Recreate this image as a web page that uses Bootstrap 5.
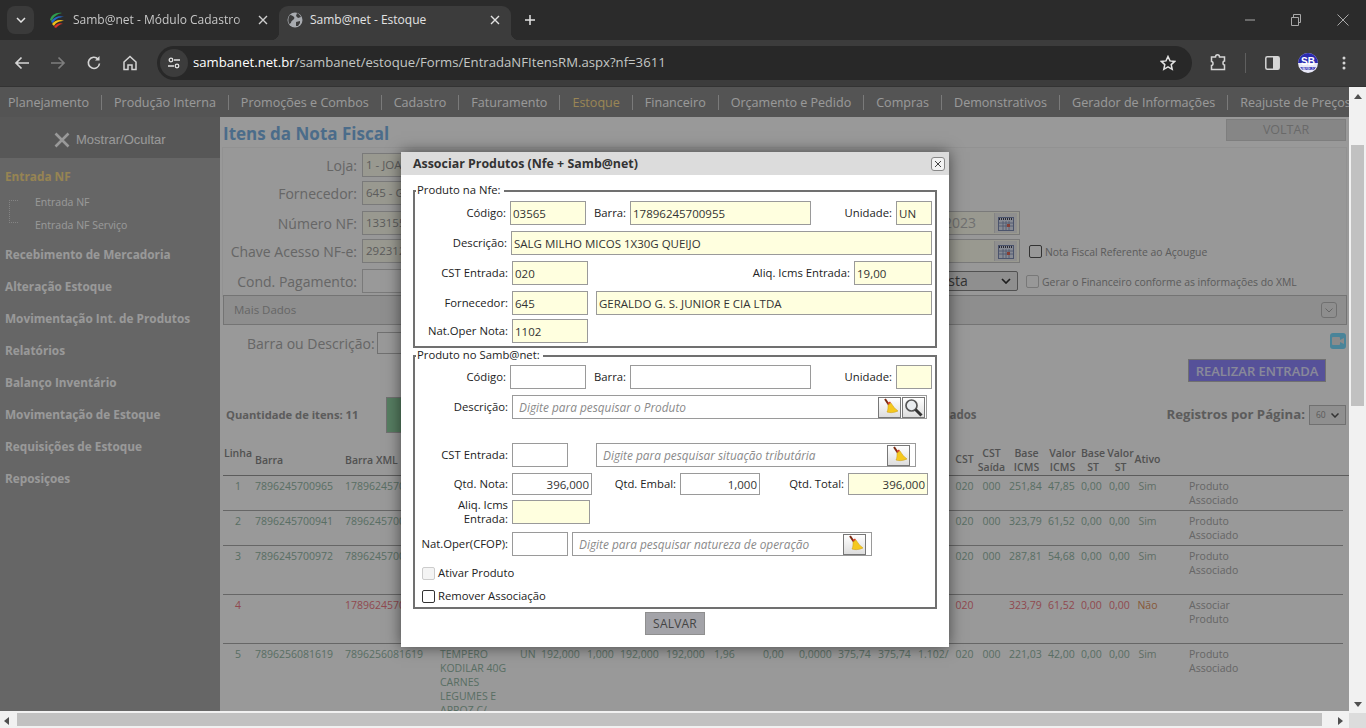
<!DOCTYPE html>
<html lang="pt-BR">
<head>
<meta charset="UTF-8">
<title>Samb@net - Estoque</title>
<link href="https://cdn.jsdelivr.net/npm/bootstrap@5.3.0/dist/css/bootstrap.min.css" rel="stylesheet">
<style>
html,body{height:100%;overflow:hidden}
body{font-family:"Open Sans",sans-serif;background:#fff;color:#333;font-size:12px}
svg{display:block;flex:none}

/* browser chrome */
.tabstrip{height:40px;background:#2b2b2b;padding:6px 0 0 7px;color:#c7c7c7;font-size:12px}
.tabdrop{width:27px;height:28px;border-radius:8px;background:#3a3a3a;margin-right:7px}
.tabitem{height:34px;padding:0 0 6px 7px}
.tabitem.inactive{width:238px}
.tabitem.active{width:232px;margin-left:0;background:#3c3c3c;border-radius:9px 9px 0 0;padding-left:8px;position:relative;color:#e3e3e3}
.tabitem.active::before,.tabitem.active::after{content:"";position:absolute;bottom:0;width:8px;height:8px}
.tabitem.active::before{left:-8px;background:radial-gradient(circle at 0 0,transparent 8px,#3c3c3c 8.5px)}
.tabitem.active::after{right:-8px;background:radial-gradient(circle at 100% 0,transparent 8px,#3c3c3c 8.5px)}
.tabtitle{white-space:nowrap;overflow:hidden;margin-left:7px;flex:1}
.inactive .tabtitle{-webkit-mask-image:linear-gradient(90deg,#000 92%,transparent);mask-image:linear-gradient(90deg,#000 92%,transparent)}
.tabclose{margin:0 11px 0 8px}
.newtab{margin:8px 0 0 13px}
.winbtns{gap:36px;margin-left:auto;padding-right:17px;padding-bottom:6px}
.toolbar{height:47px;background:#3c3c3c;padding:0 0 1px 4px;border-bottom:1px solid #333}
.toolslot{width:36px;display:flex;justify-content:center;flex:none}
.extslot{margin-left:8px}
.addrbar{width:1035px;height:34px;background:#282828;border-radius:17px;margin-left:9px;padding:0 16px 0 3px;font-size:13.15px;color:#c4c7c5;flex:none}
.addrbar b{font-weight:400;color:#fff}
.sitechip{width:28px;height:28px;border-radius:50%;background:#3c3c3c;margin-right:5px}
.toolsep{width:1px;height:20px;background:#5f5f5f;margin:0 8px 0 9px;flex:none}

/* page */
.pageframe{height:624px}
.viewport{width:1349px;height:624px;overflow:hidden;position:relative;background:#fff}
.vtrack{width:17px;background:#f1f1f1;padding-top:3px}
.vthumb{width:13px;height:261px;margin:46px 2px 0;background:#c1c1c1}
.htrack{height:17px;background:#f1f1f1;padding-top:2px}
.hthumb{width:1305px;height:13px;background:#c1c1c1}
.hcorner{width:17px;height:15px;background:#dcdcdc;margin-left:auto}
.overlay{position:absolute;inset:0;background:rgba(0,0,0,.4);z-index:5}

.topmenu{height:30px;background:#8c8c8c;white-space:nowrap;padding-left:8px;font-size:12.55px}
.topmenu span{color:#fff;padding-right:12px;margin-right:12px;border-right:1px solid #ccc;line-height:15px;flex:none}
.topmenu span.cur{color:#ffdf8e}
.topmenu span:last-child{border:0}

.sidemenu{width:220px;height:594px;background:#aaa;color:#fff;flex:none}
.sidehead{height:41px;background:#919191;padding:5px 0 0 54px;font-family:"Liberation Sans",sans-serif;font-size:13px;gap:6px}
.sideitem{font-weight:700;font-size:11.8px;height:32px;line-height:30px;padding-left:5px}
.sideitem.cur{color:#fbdd8a;height:36px;line-height:36px}
.sidesub{font-size:10.5px;height:23px;line-height:23px;padding-left:35px}
.subtree{height:46px;position:relative;margin:-3px 0 2px}
.subtree i{position:absolute;left:9px;top:9px;width:9px;height:23px;border-left:1px dotted #ddd;border-top:1px dotted #ddd;border-bottom:1px dotted #ddd;border-right:0}

.mainpane{width:1129px;height:594px;overflow:hidden;flex:none}
.titlerow{height:30px;padding:0 3px}
.pagetitle{font-size:17px;font-weight:700;color:#7eb5e6;padding-top:3px}
.backbtn{width:120px;height:22px;background:#e0e0e0;border:1px solid #d2d2d2;color:#b0b0b0;font-size:12.5px;margin-top:-4px;text-align:center;line-height:20px}
.formpanel{height:150px;margin:0 2px;background:#fdfdfd;border:1px solid #f3f3f3;border-bottom:0;padding-top:5px}
.fmrow{height:24px;margin-bottom:4px;font-size:14px;color:#aaa}
.fmrow.gap6{margin-bottom:6px}
.fmlbl{width:134px;text-align:right;margin-right:5px;white-space:nowrap;flex:none}
.fmin{height:24px;width:200px;border:1px solid #ccc;background:#fffff0;font-size:11.5px;padding:0 3px;line-height:22px;color:#999;overflow:hidden;white-space:nowrap}
.fmin.blank{background:#fff}
.fmright{margin-left:auto;width:448px;flex:none}
.dateout{width:122px;height:24px;border:1px solid #ccc;background:#fffff0;padding:2px;font-size:14px;color:#bbb;line-height:18px;flex:none}
.calbtn{width:23px;height:20px;background:#eee;border-left:1px solid #ddd;margin-left:18px}
.fmnote{font-size:10.4px;color:#999;white-space:nowrap;margin:3px 0 0 3px}
.fmcheck{width:13px;height:13px;border:1px solid #555;border-radius:2px;background:transparent;flex:none}
.fmcheck.near{margin-left:9px}
.fmcheck.off{border-color:#c8c8c8;margin-left:8px}
.fmselect{width:98px;height:20px;border:1px solid #888;border-radius:2px;background:#eee;font-size:14px;color:#555;padding:0 6px 0 4px;line-height:18px;margin-left:22px;flex:none}
.moredata{height:30px;margin:-2px 2px 0 3px;background:#ededed;border:1px solid #c2c2c2;padding:0 9px 0 10px;font-size:11.5px;color:#aaa}
.chevbox{width:16px;height:16px;border:1px solid #bbb;border-radius:3px}
.searchrow{height:34px;font-size:14px;color:#aaa;padding:2px 3px 0 27px}
.searchrow .blank{width:40px;height:22px;border:1px solid #bbb;background:#fff;margin-left:2px}
.vidbtn{width:16px;height:16px;border-radius:3px;background:#7cdcff;margin-top:-4px}
.actionrow{height:35px;justify-content:flex-end;padding-right:23px}
.enterbtn{width:138px;height:23px;background:#8f88ff;border:1px solid #bbb;color:#e4e4ff;font-size:13px;font-weight:600;text-align:center;line-height:22px}
.pagerrow{height:42px;padding:0 3px 0 6px;color:#999;font-weight:700}
.itemcount{width:160px;font-size:11.2px}
.greenbtn{width:60px;height:36px;background:#8fd0a2;border:1px solid #bbb}
.pagehint{margin-left:auto;font-size:11.5px}
.perpage{font-size:13.2px;margin-left:190px;white-space:nowrap}
.perbox{width:37px;height:20px;border:1px solid #bbb;background:#eee;margin-left:4px;font-size:8.5px;font-weight:400;padding-left:6px;gap:5px}

.itemtable{table-layout:fixed;width:1126px;border-collapse:collapse;font-size:10.5px;line-height:14px;margin:9px 0 0 3px}
.itemtable th{font-weight:600;color:#888;vertical-align:bottom;text-align:center;padding:0 0 1px;line-height:14px;height:30px;border-bottom:1px solid #999;font-size:10.5px}
.itemtable th.lft{text-align:left;padding-left:2px;padding-bottom:8px}
.itemtable th.up{vertical-align:top;padding-top:1px}
.itemtable th.mid{vertical-align:middle}
.itemtable td{vertical-align:top;padding:3px 2px 0;border-bottom:1px solid #aaa;color:#94b8a6;white-space:nowrap;overflow:hidden}
.itemtable td.nobrd{border-bottom:0}
.itemtable .txtc{text-align:center}
.itemtable .acttxt{color:#aaa;padding-left:28px}
.itemtable .descr{white-space:normal;padding-right:8px}
.itemtable tr.bad td{color:#f07a85}
.itemtable tr.bad td.acttxt{color:#aaa}
.itemtable td.yes{color:#a0b8a8}
.itemtable tr.bad td.no{color:#e2925e}
.itemtable tr.h35{height:35px}
.itemtable tr.h49{height:49px}

/* dialog */
.assocdlg{position:absolute;z-index:10;left:401px;top:65px;width:548px;height:495px;background:#fff;box-shadow:0 0 14px rgba(0,0,0,.55);font-size:11.3px;color:#222}
.dlghead{height:23px;background:#dcdcdc;padding:1px 4px 0 12px;font-weight:700;font-size:12.4px;color:#333}
.dlgx{width:14px;height:14px;border:1px solid #888;border-radius:3px;background:#f2f2f2}
.dlgfield{margin:0 0 0 12px;width:524px;border:2px solid #707070;position:relative;min-width:0}
.dlgfield legend{float:none;width:auto;margin:-9px 0 0 1px;padding:0 3px 0 1px;font-size:11.3px;line-height:14px;color:#222;background:#fff;position:absolute;left:0;top:0}
.nfefield{height:158px;margin-top:15px;padding-top:9px}
.sysfield{height:254px;margin-top:7px;padding-top:8px}
.dlgrow{display:flex;align-items:center;white-space:nowrap;margin-bottom:6px}
.dlgrow.tight4{margin-bottom:4px}
.dlgrow.tight3{margin-bottom:3px}
.dlgrow.wide{margin-bottom:24px}
.dlgrow.nat{margin-bottom:6px}
.dlglb{text-align:right;padding-right:4px;flex:none}
.dlgin{height:24px;border:1px solid #9a9a9a;background:#fff;padding:0 2px;font-size:11.5px;font-family:inherit;color:#333;flex:none;border-radius:0;outline:0}
.dlgin.yel{background:#ffffdf}
.dlgin.num{text-align:right}
.lb95{width:95px}.lb96{width:96px}.lb97{width:97px}.lb44{width:44px}.lb85{width:85px}.lb266{width:266px}.lb88{width:88px}
.in36{width:36px}.in56{width:56px}.in76{width:76px}.in78{width:78px}.in80{width:80px}.in181{width:181px}.in421{width:421px}.in336{width:336px}
.ms8{margin-left:8px}.ms4{margin-left:4px}.ms28{margin-left:28px}
.row22{height:22px}
.searchbox{height:24px;border:1px solid #9a9a9a;display:flex;align-items:center;padding-right:1px;gap:1px;flex:none}
.searchbox input{border:0;outline:0;flex:1;min-width:0;height:20px;font-size:11.85px;font-style:italic;font-family:inherit;padding:0 6px;background:transparent}
.searchbox input::placeholder{color:#8a8a8a;opacity:1}
.sb415{width:415px}.sb320{width:320px}.sb300{width:300px}
.iconbtn{width:23px;height:21px;border:1px solid #777;background:linear-gradient(#fff,#ddd);display:flex;align-items:center;justify-content:center;flex:none}
.aliqlb{width:97px;line-height:14px;white-space:normal}
.chkrow{height:23px;padding-left:7px;gap:3px;margin:0}
.chkbox{width:13px;height:13px;border:1px solid #333;border-radius:2px;flex:none}
.chkbox.off{border-color:#ccc;background:#f4f4f4}
.savewrap{padding-top:3px}
.savebtn{width:60px;height:23px;background:#a3a3a8;border:1px solid #8f8f8f;color:#444;font-size:12px;line-height:21px;text-align:center;letter-spacing:.2px}
</style>
</head>
<body>

<div class="tabstrip d-flex align-items-start">
  <div class="tabdrop d-flex align-items-center justify-content-center">
    <svg width="10" height="6" viewBox="0 0 10 6"><path d="M1 1l4 4 4-4" fill="none" stroke="#e3e3e3" stroke-width="1.5"/></svg>
  </div>
  <div class="tabitem inactive d-flex align-items-center">
    <svg width="18" height="18" viewBox="0 0 18 18"><path d="M2 9C3 4 8 1 14 2 9 3 5 6 4 10z" fill="#2e9e4f"/><path d="M3 11C5 7 10 4 16 6 11 6 7 8 5 12z" fill="#2467c9"/><path d="M4 13C7 9 12 8 16 10 12 10 8 11 6 15z" fill="#f2c21a"/><path d="M6 16C8 13 12 11 15 13 12 13 10 15 8 17z" fill="#d8322a"/></svg>
    <div class="tabtitle">Samb@net - Módulo Cadastro</div>
    <svg class="tabclose" width="10" height="10" viewBox="0 0 10 10"><path d="M1 1l8 8M9 1l-8 8" stroke="#cfcfcf" stroke-width="1.4"/></svg>
  </div>
  <div class="tabitem active d-flex align-items-center">
    <svg width="16" height="16" viewBox="0 0 16 16"><circle cx="8" cy="8" r="7.5" fill="#a8abb0"/><path d="M3 3c2 0 3 1 4 2s0 2-1 3-2 1-2 3l-2 1C1 9 1 5 3 3zM10 1c2 1 3 2 4 4l-3 1-2-2zM9 10l4-1 0 2-2 3-2 0z" fill="#3c3c3c"/></svg>
    <div class="tabtitle">Samb@net - Estoque</div>
    <svg class="tabclose" width="10" height="10" viewBox="0 0 10 10"><path d="M1 1l8 8M9 1l-8 8" stroke="#e3e3e3" stroke-width="1.4"/></svg>
  </div>
  <svg class="newtab" width="12" height="12" viewBox="0 0 12 12"><path d="M6 1v10M1 6h10" stroke="#e3e3e3" stroke-width="1.5"/></svg>
  <div class="winbtns d-flex align-items-center h-100">
    <svg width="10" height="10" viewBox="0 0 10 10"><path d="M0 5h10" stroke="#a9a9a9"/></svg>
    <svg width="10" height="12" viewBox="0 0 10 12"><path d="M.5 3.500h7v8h-7zM2.500 3V.5h7v8H8" fill="none" stroke="#a9a9a9"/></svg>
    <svg width="12" height="12" viewBox="0 0 12 12"><path d="M.5.5l11 11M11.500.5l-11 11" stroke="#a9a9a9"/></svg>
  </div>
</div>

<div class="toolbar d-flex align-items-center">
  <div class="toolslot"><svg width="16" height="14" viewBox="0 0 16 14"><path d="M15 7H2M7.500 1.500L2 7l5.500 5.500" fill="none" stroke="#d5d5d5" stroke-width="1.700"/></svg></div>
  <div class="toolslot"><svg width="16" height="14" viewBox="0 0 16 14"><path d="M1 7h13M8.500 1.500L14 7l-5.500 5.500" fill="none" stroke="#7d7d7d" stroke-width="1.700"/></svg></div>
  <div class="toolslot"><svg width="16" height="16" viewBox="0 0 16 16"><path d="M13.500 8.500A5.600 5.600 0 1 1 12 4" fill="none" stroke="#d5d5d5" stroke-width="1.600"/><path d="M13.500 1v4.500H9z" fill="#d5d5d5"/></svg></div>
  <div class="toolslot"><svg width="16" height="16" viewBox="0 0 16 16"><path d="M2 7l6-5.500L14 7v7.500h-4V10H6v4.500H2z" fill="none" stroke="#d5d5d5" stroke-width="1.500"/></svg></div>
  <div class="addrbar d-flex align-items-center">
    <div class="sitechip d-flex align-items-center justify-content-center">
      <svg width="14" height="12" viewBox="0 0 14 12"><circle cx="4" cy="3" r="1.800" fill="none" stroke="#e3e3e3" stroke-width="1.300"/><path d="M7 3h6M1 9h6" stroke="#e3e3e3" stroke-width="1.300"/><circle cx="10" cy="9" r="1.800" fill="none" stroke="#e3e3e3" stroke-width="1.300"/></svg>
    </div>
    <div><b>sambanet.net.br</b>/sambanet/estoque/Forms/EntradaNFItensRM.aspx?nf=3611</div>
    <svg class="ms-auto" width="16" height="16" viewBox="0 0 16 16"><path d="M8 1.500l2 4.400 4.700.5-3.500 3.200 1 4.700L8 11.900l-4.200 2.400 1-4.700L1.300 6.400 6 5.900z" fill="none" stroke="#e3e3e3" stroke-width="1.500"/></svg>
  </div>
  <div class="toolslot extslot"><svg width="16" height="17" viewBox="0 0 16 17"><path d="M1.500 3h4c0-3 4-3 4 0h5v4c-2 0-2 4 0 4v4.500h-13v-4c2 0 2-4 0-4z" fill="none" stroke="#d5d5d5" stroke-width="1.500"/></svg></div>
  <div class="toolsep"></div>
  <div class="toolslot"><svg width="15" height="14" viewBox="0 0 15 14"><rect x=".8" y=".8" width="13.400" height="12.400" rx="1.500" fill="none" stroke="#d5d5d5" stroke-width="1.500"/><rect x="8" y="1" width="6" height="12" fill="#d5d5d5"/></svg></div>
  <div class="toolslot"><svg width="20" height="20" viewBox="0 0 20 20"><circle cx="10" cy="10" r="10" fill="#e8e8f8"/><path d="M0 10a10 10 0 0 1 20 0z" fill="#2b2bb0"/><path d="M2 14h16l-2 3H4z" fill="#2b2bb0"/><text x="10" y="12" text-anchor="middle" font-family="Liberation Sans" font-weight="700" font-size="10" fill="#fff">SB</text><text x="10" y="17" text-anchor="middle" font-family="Liberation Sans" font-size="4" fill="#fff">VAREJO</text></svg></div>
  <div class="toolslot"><svg width="4" height="14" viewBox="0 0 4 14"><circle cx="2" cy="2" r="1.500" fill="#d5d5d5"/><circle cx="2" cy="7" r="1.500" fill="#d5d5d5"/><circle cx="2" cy="12" r="1.500" fill="#d5d5d5"/></svg></div>
</div>

<div class="pageframe d-flex">
  <div class="viewport">
    <div class="topmenu d-flex align-items-center">
      <span>Planejamento</span><span>Produção Interna</span><span>Promoções e Combos</span><span>Cadastro</span><span>Faturamento</span><span class="cur">Estoque</span><span>Financeiro</span><span>Orçamento e Pedido</span><span>Compras</span><span>Demonstrativos</span><span>Gerador de Informações</span><span>Reajuste de Preços</span>
    </div>
    <div class="d-flex">
      <div class="sidemenu">
        <div class="sidehead d-flex align-items-center">
          <svg width="16" height="16" viewBox="0 0 16 16"><path d="M1.500 1.500l13 13M14.500 1.500l-13 13" stroke="#fff" stroke-width="2.600"/></svg>
          Mostrar/Ocultar
        </div>
        <div class="sideitem cur">Entrada NF</div>
        <div class="subtree"><i></i>
          <div class="sidesub">Entrada NF</div>
          <div class="sidesub">Entrada NF Serviço</div>
        </div>
        <div class="sideitem">Recebimento de Mercadoria</div>
        <div class="sideitem">Alteração Estoque</div>
        <div class="sideitem">Movimentação Int. de Produtos</div>
        <div class="sideitem">Relatórios</div>
        <div class="sideitem">Balanço Inventário</div>
        <div class="sideitem">Movimentação de Estoque</div>
        <div class="sideitem">Requisições de Estoque</div>
        <div class="sideitem">Reposiçoes</div>
      </div>
      <div class="mainpane">
        <div class="titlerow d-flex align-items-center justify-content-between">
          <div class="pagetitle">Itens da Nota Fiscal</div>
          <div class="backbtn">VOLTAR</div>
        </div>
        <div class="formpanel">
          <div class="fmrow d-flex align-items-center"><div class="fmlbl">Loja:</div><div class="fmin">1 - JOAO</div></div>
          <div class="fmrow gap6 d-flex align-items-center"><div class="fmlbl">Fornecedor:</div><div class="fmin">645 - GERALDO</div></div>
          <div class="fmrow d-flex align-items-center"><div class="fmlbl">Número NF:</div><div class="fmin">133155</div>
            <div class="fmright d-flex align-items-center"><div class="dateout d-flex align-items-center justify-content-end">/2023<div class="calbtn d-flex align-items-center justify-content-center"><svg width="16" height="15" viewBox="0 0 16 15"><rect x=".5" y="1.500" width="15" height="13" fill="#dfe6f5" stroke="#7d8db5"/><path d="M1 3h14" stroke="#445" stroke-width="2" stroke-dasharray="1 1"/><path d="M1 7h14M1 10h14M5 5v9M8 5v9M11 5v9" stroke="#7d8db5" stroke-width=".8"/><rect x="9" y="8" width="3" height="3" fill="#e06a5a"/></svg></div></div></div>
          </div>
          <div class="fmrow gap6 d-flex align-items-center"><div class="fmlbl">Chave Acesso NF-e:</div><div class="fmin">29231245</div>
            <div class="fmright d-flex align-items-center"><div class="dateout d-flex align-items-center justify-content-end"><div class="calbtn d-flex align-items-center justify-content-center"><svg width="16" height="15" viewBox="0 0 16 15"><rect x=".5" y="1.500" width="15" height="13" fill="#dfe6f5" stroke="#7d8db5"/><path d="M1 3h14" stroke="#445" stroke-width="2" stroke-dasharray="1 1"/><path d="M1 7h14M1 10h14M5 5v9M8 5v9M11 5v9" stroke="#7d8db5" stroke-width=".8"/><rect x="9" y="8" width="3" height="3" fill="#e06a5a"/></svg></div></div>
              <div class="fmcheck near"></div><div class="fmnote">Nota Fiscal Referente ao Açougue</div></div>
          </div>
          <div class="fmrow d-flex align-items-center"><div class="fmlbl">Cond. Pagamento:</div><div class="fmin blank"></div>
            <div class="fmright d-flex align-items-center"><div class="fmselect d-flex align-items-center justify-content-between"><span>à Vista</span><svg width="10" height="6" viewBox="0 0 10 6"><path d="M1 1l4 4 4-4" fill="none" stroke="#333" stroke-width="1.700"/></svg></div>
              <div class="fmcheck off"></div><div class="fmnote">Gerar o Financeiro conforme as informações do XML</div></div>
          </div>
        </div>
        <div class="moredata d-flex align-items-center justify-content-between">Mais Dados
          <div class="chevbox d-flex align-items-center justify-content-center"><svg width="8" height="5" viewBox="0 0 8 5"><path d="M.5.5L4 4 7.500.5" fill="none" stroke="#aaa"/></svg></div>
        </div>
        <div class="searchrow d-flex align-items-center justify-content-between">
          <div class="d-flex align-items-center">Barra ou Descrição:<div class="blank"></div></div>
          <div class="vidbtn d-flex align-items-center justify-content-center"><svg width="12" height="8" viewBox="0 0 12 8"><rect width="8" height="8" rx="1" fill="#e8e8e8"/><path d="M8 3l4-2v6L8 5z" fill="#e8e8e8"/></svg></div>
        </div>
        <div class="actionrow d-flex align-items-start"><div class="enterbtn">REALIZAR ENTRADA</div></div>
        <div class="pagerrow d-flex align-items-center">
          <div class="itemcount">Quantidade de itens: 11</div>
          <div class="greenbtn"></div>
          <div class="pagehint">ados</div>
          <div class="perpage d-flex align-items-center">Registros por Página:<div class="perbox d-flex align-items-center">60<svg width="8" height="5" viewBox="0 0 8 5"><path d="M.5.5L4 4 7.500.5" fill="none" stroke="#555" stroke-width="1.500"/></svg></div></div>
        </div>
        <table class="itemtable" id="itens">
          <colgroup id="cols"></colgroup>
          <thead><tr id="head"></tr></thead>
          <tbody id="rows"></tbody>
        </table>
      </div>
    </div>
    <div class="overlay"></div>

    <div class="assocdlg">
      <div class="dlghead d-flex align-items-center justify-content-between">Associar Produtos (Nfe + Samb@net)
        <div class="dlgx d-flex align-items-center justify-content-center"><svg width="8" height="8" viewBox="0 0 8 8"><path d="M1 1l6 6M7 1L1 7" stroke="#444"/></svg></div>
      </div>
      <fieldset class="dlgfield nfefield">
        <legend>Produto na Nfe:</legend>
        <div class="dlgrow"><div class="dlglb lb95">Código:</div><input class="dlgin yel in76" value="03565" readonly><div class="dlglb lb44">Barra:</div><input class="dlgin yel in181" value="17896245700955" readonly><div class="dlglb lb85">Unidade:</div><input class="dlgin yel in36" value="UN" readonly></div>
        <div class="dlgrow"><div class="dlglb lb96">Descrição:</div><input class="dlgin yel in421" value="SALG MILHO MICOS 1X30G QUEIJO" readonly></div>
        <div class="dlgrow"><div class="dlglb lb97">CST Entrada:</div><input class="dlgin yel in76" value="020" readonly><div class="dlglb lb266">Aliq. Icms Entrada:</div><input class="dlgin yel in78" value="19,00" readonly></div>
        <div class="dlgrow tight4"><div class="dlglb lb97">Fornecedor:</div><input class="dlgin yel in76" value="645" readonly><input class="dlgin yel in336 ms8" value="GERALDO G. S. JUNIOR E CIA LTDA" readonly></div>
        <div class="dlgrow"><div class="dlglb lb97">Nat.Oper Nota:</div><input class="dlgin yel in76" value="1102" readonly></div>
      </fieldset>
      <fieldset class="dlgfield sysfield">
        <legend>Produto no Samb@net:</legend>
        <div class="dlgrow"><div class="dlglb lb95">Código:</div><input class="dlgin in76"><div class="dlglb lb44">Barra:</div><input class="dlgin in181"><div class="dlglb lb85">Unidade:</div><input class="dlgin yel in36" readonly></div>
        <div class="dlgrow wide"><div class="dlglb lb97">Descrição:</div>
          <div class="searchbox sb415"><input placeholder="Digite para pesquisar o Produto">
            <div class="iconbtn"><svg width="18" height="19" viewBox="0 0 18 19"><path d="M4 1l4 6" stroke="#7a2a12" stroke-width="2"/><path d="M6.500 5l2.500-1.500 1 1.500-2.500 1.500z" fill="#d83a20"/><path d="M7 7l3-2c2 3 4 6 7 8-4 2-9 2-11 1 1-2 1-4 1-7z" fill="#f5c81e" stroke="#c99a10" stroke-width=".5"/></svg></div>
            <div class="iconbtn"><svg width="19" height="19" viewBox="0 0 19 19"><circle cx="7.500" cy="7.500" r="5.500" fill="#e9ecef" stroke="#555" stroke-width="1.700"/><path d="M11.500 11.500l6 6" stroke="#333" stroke-width="3"/></svg></div>
          </div></div>
        <div class="dlgrow"><div class="dlglb lb97">CST Entrada:</div><input class="dlgin in56">
          <div class="searchbox sb320 ms28"><input placeholder="Digite para pesquisar situação tributária">
            <div class="iconbtn me-1"><svg width="18" height="19" viewBox="0 0 18 19"><path d="M4 1l4 6" stroke="#7a2a12" stroke-width="2"/><path d="M6.500 5l2.500-1.500 1 1.500-2.500 1.500z" fill="#d83a20"/><path d="M7 7l3-2c2 3 4 6 7 8-4 2-9 2-11 1 1-2 1-4 1-7z" fill="#f5c81e" stroke="#c99a10" stroke-width=".5"/></svg></div>
          </div></div>
        <div class="dlgrow tight3"><div class="dlglb lb97">Qtd. Nota:</div><input class="dlgin num in80 row22" value="396,000"><div class="dlglb lb88">Qtd. Embal:</div><input class="dlgin num in80 row22" value="1,000"><div class="dlglb lb88">Qtd. Total:</div><input class="dlgin num yel in80 row22" value="396,000" readonly></div>
        <div class="dlgrow"><div class="dlglb aliqlb">Aliq. Icms Entrada:</div><input class="dlgin yel in78" readonly></div>
        <div class="dlgrow nat"><div class="dlglb lb97">Nat.Oper(CFOP):</div><input class="dlgin in56">
          <div class="searchbox sb300 ms4"><input placeholder="Digite para pesquisar natureza de operação">
            <div class="iconbtn me-1"><svg width="18" height="19" viewBox="0 0 18 19"><path d="M4 1l4 6" stroke="#7a2a12" stroke-width="2"/><path d="M6.500 5l2.500-1.500 1 1.500-2.500 1.500z" fill="#d83a20"/><path d="M7 7l3-2c2 3 4 6 7 8-4 2-9 2-11 1 1-2 1-4 1-7z" fill="#f5c81e" stroke="#c99a10" stroke-width=".5"/></svg></div>
          </div></div>
        <div class="dlgrow chkrow"><div class="chkbox off"></div>Ativar Produto</div>
        <div class="dlgrow chkrow"><div class="chkbox"></div>Remover Associação</div>
      </fieldset>
      <div class="savewrap d-flex justify-content-center"><div class="savebtn">SALVAR</div></div>
    </div>
  </div>
  <div class="vtrack d-flex flex-column">
    <svg class="mx-auto mt-1" width="8" height="5" viewBox="0 0 8 5"><path d="M4 0l4 5H0z" fill="#505050"/></svg>
    <div class="vthumb"></div>
    <svg class="mx-auto mt-auto mb-1" width="8" height="5" viewBox="0 0 8 5"><path d="M4 5l4-5H0z" fill="#505050"/></svg>
  </div>
</div>
<div class="htrack d-flex">
  <svg class="ms-1 mt-1" width="5" height="8" viewBox="0 0 5 8"><path d="M0 4l5-4v8z" fill="#505050"/></svg>
  <div class="hthumb ms-2"></div>
  <svg class="ms-3 mt-1" width="5" height="8" viewBox="0 0 5 8"><path d="M5 4L0 0v8z" fill="#505050"/></svg>
  <div class="hcorner"></div>
</div>

<script>
  // larguras das colunas e linhas da grade
  const widths = [30,90,95,80,21,46,33,46,48,49,36,39,40,40,37,23,31,39,33,28,27,27,182,6];
  document.getElementById("cols").innerHTML = widths.map(w => `<col style="width:${w}px">`).join("");
  const heads = ["Linha","Barra","Barra XML","","","","","","","","","","","","","CST","CST<br>Saída","Base<br>ICMS","Valor<br>ICMS","Base<br>ST","Valor<br>ST","Ativo","",""];
  document.getElementById("head").innerHTML = heads.map((h, i) => {
    const cls = i === 1 || i === 2 ? "lft" : i === 0 ? "up" : i === 15 || i === 21 ? "mid" : "";
    return `<th class="${cls}">${h}</th>`;
  }).join("");
  const mid = ["UN","192,000","1,000","192,000","192,000","1,96","0,00","0,0000","375,74","375,74","1.102/"];
  const data = [
    {n:1,b:"7896245700965",x:"17896245700965",d:"",c:"000",v:["251,84","47,85"],a:"Sim",acao:"Produto<br>Associado",h:"h35"},
    {n:2,b:"7896245700941",x:"7896245700941",d:"",c:"000",v:["323,79","61,52"],a:"Sim",acao:"Produto<br>Associado",h:"h35"},
    {n:3,b:"7896245700972",x:"7896245700972",d:"",c:"000",v:["287,81","54,68"],a:"Sim",acao:"Produto<br>Associado",h:"h49"},
    {n:4,b:"",x:"17896245700941",d:"",c:"",v:["323,79","61,52"],a:"Não",acao:"Associar<br>Produto",h:"h49",bad:true},
    {n:5,b:"7896256081619",x:"7896256081619",d:"TEMPERO KODILAR 40G CARNES LEGUMES E ARROZ C/ ALHO",c:"000",v:["221,03","42,00"],a:"Sim",acao:"Produto<br>Associado",h:"",m:mid}
  ];
  document.getElementById("rows").innerHTML = data.map(r => {
    const m = r.m || mid;
    return `<tr class="${r.h} ${r.bad ? "bad" : ""}">
      <td class="txtc">${r.n}</td><td>${r.b}</td><td>${r.x}</td><td class="descr">${r.d}</td>
      ${m.map(v => `<td>${v}</td>`).join("")}
      <td class="txtc">020</td><td class="txtc">${r.c}</td><td>${r.v[0]}</td><td>${r.v[1]}</td><td>0,00</td><td>0,00</td>
      <td class="txtc ${r.bad ? "no" : "yes"}">${r.a}</td><td class="acttxt">${r.acao}</td><td class="nobrd"></td></tr>`;
  }).join("");
</script>
<script src="https://cdn.jsdelivr.net/npm/bootstrap@5.3.0/dist/js/bootstrap.bundle.min.js"></script>
</body>
</html>
